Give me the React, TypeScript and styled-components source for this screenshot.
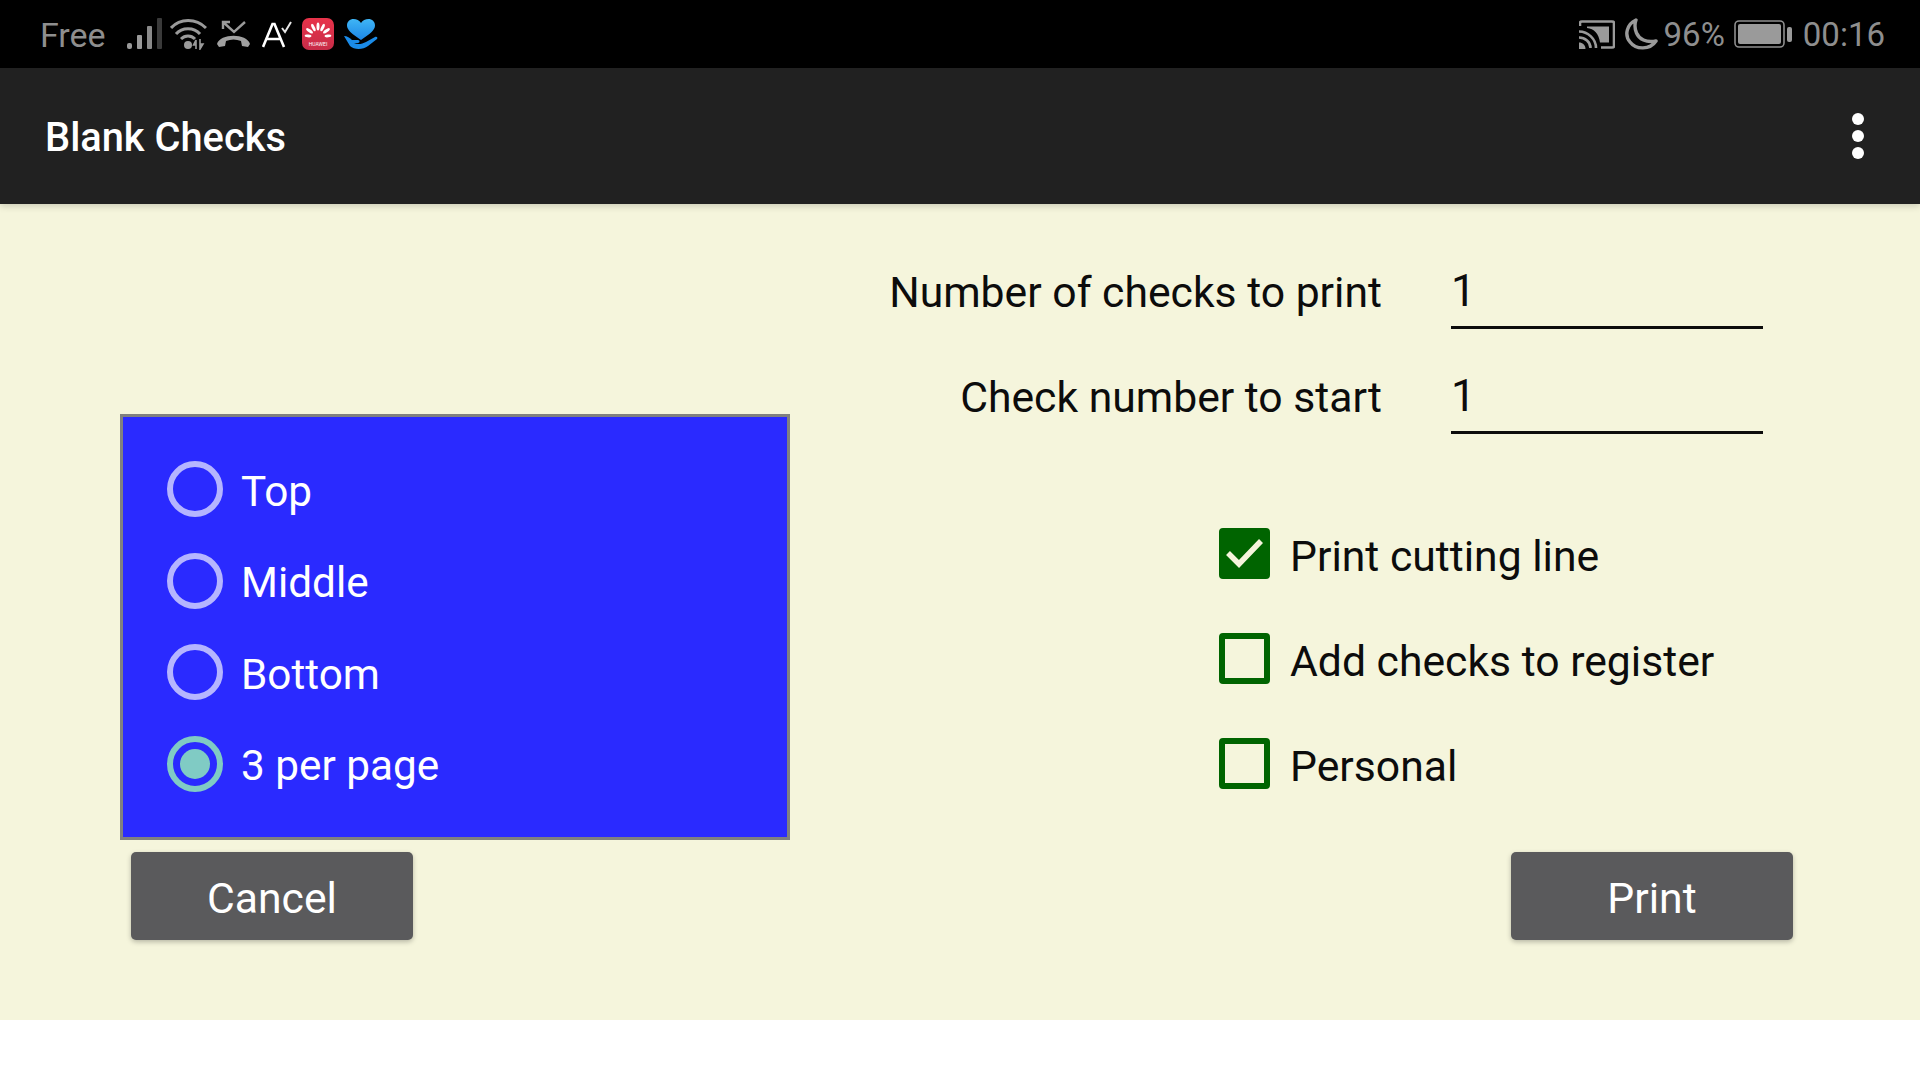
import React from "react";
import styled, { createGlobalStyle } from "styled-components";

const Global = createGlobalStyle`
  html, body { margin: 0; padding: 0; background: #fff; }
  body { font-family: Roboto, "Liberation Sans", sans-serif; }
  * { box-sizing: border-box; }
`;

const Screen = styled.div`
  width: 1920px;
  height: 1080px;
  overflow: hidden;
  display: flex;
  flex-direction: column;
  background: #fff;
`;

const StatusBar = styled.div`
  height: 68px;
  flex: none;
  background: #000;
  color: #8e8e8e;
  display: flex;
  align-items: center;
  justify-content: space-between;
  padding: 0 35px 0 40px;
  font-size: 33px;
  line-height: 68px;
`;

const StatusGroup = styled.div`
  display: flex;
  align-items: center;
`;

const StatusText = styled.span<{ $left?: number; $size?: number }>`
  margin-left: ${(p) => p.$left ?? 0}px;
  font-size: ${(p) => p.$size ?? 33}px;
  position: relative;
  top: 1px;
`;

const Icon = styled.svg<{ $left: number }>`
  display: block;
  flex: none;
  margin-left: ${(p) => p.$left}px;
`;

const Toolbar = styled.header`
  height: 136px;
  flex: none;
  background: #212121;
  display: flex;
  align-items: center;
  justify-content: space-between;
  padding: 0 56px 0 45px;
  position: relative;
  z-index: 1;
  box-shadow: 0 2px 7px rgba(0, 0, 0, 0.18);
`;

const Title = styled.h1`
  margin: 0;
  padding-top: 2px;
  color: #fff;
  font-size: 39.8px;
  font-weight: 500;
`;

const Overflow = styled.div`
  display: flex;
  flex-direction: column;
  gap: 5px;
`;

const Dot = styled.span`
  width: 12px;
  height: 12px;
  border-radius: 50%;
  background: #fff;
`;

const Main = styled.main`
  height: 816px;
  flex: none;
  background: #f5f5dc;
  display: flex;
  color: #0c0c0c;
  font-size: 42.7px;
`;

const LeftColumn = styled.section`
  width: 790px;
  padding: 210px 0 0 120px;
  flex: none;
`;

const RadioPanel = styled.div`
  width: 670px;
  height: 426px;
  background: #2a2aff;
  border: 3px solid #808080;
  padding: 44px 0 0 44px;
  display: flex;
  flex-direction: column;
  gap: 35.5px;
`;

const RadioRow = styled.div`
  display: flex;
  align-items: center;
  height: 56px;
  gap: 18px;
  color: #fff;
`;

const RadioLabel = styled.span`
  font-size: 42.3px;
  padding-top: 4px;
`;

const RadioCircle = styled.span<{ $on?: boolean }>`
  width: 56px;
  height: 56px;
  flex: none;
  border-radius: 50%;
  border: 6px solid ${(p) => (p.$on ? "#80cbc4" : "#b5b5ff")};
  display: flex;
  align-items: center;
  justify-content: center;
  &::after {
    content: "";
    display: ${(p) => (p.$on ? "block" : "none")};
    width: 30px;
    height: 30px;
    border-radius: 50%;
    background: #80cbc4;
  }
`;

const ActionButton = styled.button<{ $left?: number; $right?: number }>`
  display: block;
  width: 282px;
  height: 88px;
  padding: 4px 0 0;
  border: 0;
  border-radius: 5px;
  background: #5a5a5c;
  color: #fff;
  font-family: Roboto, sans-serif;
  font-size: 42.7px;
  box-shadow: 0 2px 5px rgba(0, 0, 0, 0.25);
  margin-top: 12px;
  margin-left: ${(p) => p.$left ?? 0}px;
  margin-right: ${(p) => p.$right ?? 0}px;
`;

const RightColumn = styled.section`
  flex: 1;
  display: flex;
  flex-direction: column;
  align-items: flex-end;
  padding-top: 20px;
`;

const FieldRow = styled.div`
  height: 105px;
  display: flex;
  align-items: stretch;
  margin-right: 157px;
`;

const FieldLabel = styled.label`
  line-height: 136px;
  margin-right: 69px;
  white-space: nowrap;
`;

const FieldInput = styled.input`
  width: 312px;
  height: 105px;
  border: 0;
  border-bottom: 3px solid #0c0c0c;
  background: transparent;
  outline: 0;
  padding: 40px 0 8px;
  font-family: Roboto, sans-serif;
  font-size: 44px;
  color: #0c0c0c;
`;

const CheckList = styled.div`
  align-self: flex-start;
  margin: 94px 0 0 429px;
  display: flex;
  flex-direction: column;
  gap: 54px;
`;

const CheckRow = styled.div`
  height: 51px;
  display: flex;
  align-items: center;
  gap: 20px;
  white-space: nowrap;
`;

const CheckBox = styled.span<{ $on?: boolean }>`
  width: 51px;
  height: 51px;
  flex: none;
  border-radius: 4px;
  border: 6px solid #006400;
  background: ${(p) => (p.$on ? "#006400" : "transparent")};
  display: flex;
  align-items: center;
  justify-content: center;
`;

const CheckLabel = styled.span`
  position: relative;
  top: 2px;
`;

const BottomGap = styled.div`
  height: 51px;
  flex: none;
`;

const Footer = styled.div`
  align-self: flex-end;
`;

const Signal = () => (
  <Icon $left={21} width="35" height="32" viewBox="0 0 35 32">
    <rect x="0" y="25" width="5" height="6" rx="2" fill="#9a9a9a" />
    <rect x="10" y="17" width="5" height="14" rx="1" fill="#9a9a9a" />
    <rect x="20" y="8" width="5" height="23" rx="1" fill="#8a8a8a" />
    <rect x="30" y="0" width="5" height="31" rx="1" fill="#3a3a3a" />
  </Icon>
);

const Wifi = () => (
  <Icon $left={8} width="37" height="31" viewBox="0 0 37 31">
    <g fill="none" stroke="#9a9a9a" strokeWidth="3">
      <path d="M1 9 C10 -1 26 -1 36 9" />
      <path d="M6 15 C12 8 24 8 30 15" />
      <path d="M11 20 C15 16 21 16 25 20" />
    </g>
    <circle cx="18" cy="26" r="4" fill="#9a9a9a" />
    <path d="M26 30 V21 L23.5 26 H26 M30 20 V30 L33 25 H30" fill="#9a9a9a" stroke="#9a9a9a" strokeWidth="1.6" />
  </Icon>
);

const MissedCall = () => (
  <Icon $left={10} width="33" height="28" viewBox="0 0 33 28">
    <path d="M6 9 V2 H13 M6 2 L17 12 L28 2" fill="none" stroke="#9a9a9a" strokeWidth="2.4" />
    <path d="M0 24 C3 13 30 13 33 24 L31 27 L25 26 L24 21 C19 19 14 19 9 21 L8 26 L2 27 Z" fill="#a0a0a0" />
  </Icon>
);

const SpellCheck = () => (
  <Icon $left={12} width="30" height="27" viewBox="0 0 30 27">
    <path d="M1 26 L10.5 3 H12.5 L22 26 M5 18 H18" fill="none" stroke="#fff" strokeWidth="2.6" />
    <path d="M20 7 L23 11 L29 1" fill="none" stroke="#e6e6e6" strokeWidth="2" />
  </Icon>
);

const HuaweiBadge = () => (
  <Icon $left={10} width="32" height="32" viewBox="0 0 32 32">
    <defs>
      <linearGradient id="hw" x1="0" y1="0" x2="0" y2="1">
        <stop offset="0" stopColor="#e8334a" />
        <stop offset="1" stopColor="#c72c48" />
      </linearGradient>
    </defs>
    <rect width="32" height="32" rx="7" fill="url(#hw)" />
    <g fill="#fff">
      <ellipse cx="16" cy="8.5" rx="1.5" ry="4" />
      <ellipse cx="16" cy="8.5" rx="1.5" ry="4" transform="rotate(-26 16 19)" />
      <ellipse cx="16" cy="8.5" rx="1.5" ry="4" transform="rotate(26 16 19)" />
      <ellipse cx="16" cy="8.5" rx="1.5" ry="4" transform="rotate(-54 16 19)" />
      <ellipse cx="16" cy="8.5" rx="1.5" ry="4" transform="rotate(54 16 19)" />
      <ellipse cx="16" cy="9" rx="1.4" ry="3.4" transform="rotate(-84 16 19)" />
      <ellipse cx="16" cy="9" rx="1.4" ry="3.4" transform="rotate(84 16 19)" />
    </g>
    <text x="16" y="27.5" textAnchor="middle" fontSize="5" fontFamily="Roboto" fill="#fff">HUAWEI</text>
  </Icon>
);

const HeartHand = () => (
  <Icon $left={10} width="34" height="31" viewBox="0 0 34 31">
    <defs>
      <linearGradient id="hh" x1="0" y1="0" x2="0" y2="1">
        <stop offset="0" stopColor="#3fb5f5" />
        <stop offset="1" stopColor="#1c86e6" />
      </linearGradient>
    </defs>
    <path d="M17 21 C8 15 3 11 3 6.5 C3 2.5 6 0 9.5 0 C12.5 0 15.5 1.5 17 4 C18.5 1.5 21.5 0 24.5 0 C28 0 31 2.5 31 6.5 C31 11 26 15 17 21 Z" fill="url(#hh)" />
    <path d="M0 17 C3 17 6 19 8 21 H14 C16 21 16 24 14 24 H10 C14 26 18 25 22 23 L31 18 C33 17 34 19 33 20 L24 27 C19 31 10 31 6 27 Z" fill="#1a8be8" />
  </Icon>
);

const Cast = () => (
  <Icon $left={0} width="36" height="29" viewBox="0 0 36 29">
    <path d="M1 6 V3 Q1 1.5 3 1.5 H33 Q35 1.5 35 3 V26 Q35 27.5 33 27.5 H22" fill="none" stroke="#9a9a9a" strokeWidth="2.6" />
    <path d="M8 6.5 H30 V22.5 H21 C20 14 15 8.5 8 8 Z" fill="#9a9a9a" />
    <path d="M0 11.5 C9 11.5 17 19 17 28 M0 17.5 C6 17.5 11.5 22 11.5 28" fill="none" stroke="#9a9a9a" strokeWidth="2.6" />
    <path d="M0 22.5 C3.5 22.5 6.5 25 6.5 29 H0 Z" fill="#9a9a9a" />
  </Icon>
);

const Moon = () => (
  <Icon $left={10} width="33" height="32" viewBox="0 0 33 32">
    <path d="M11 2 C2 6 -1 17 5 24 C11 32 25 32 31 23 C21 25 14 21 11.5 15 C9.5 10 9.5 6 11 2 Z" fill="none" stroke="#9a9a9a" strokeWidth="3.4" strokeLinejoin="round" />
  </Icon>
);

const Battery = () => (
  <Icon $left={9} width="59" height="28" viewBox="0 0 59 28">
    <rect x="1" y="1" width="49" height="26" rx="4" fill="none" stroke="#8e8e8e" strokeWidth="1.6" />
    <rect x="4" y="4" width="43" height="20" rx="2" fill="#9a9a9a" />
    <rect x="53" y="7" width="5" height="15" rx="2" fill="#9a9a9a" />
  </Icon>
);

const Check = () => (
  <svg width="39" height="31" viewBox="0 0 39 31">
    <path d="M3 15 L14 26 L36 3" fill="none" stroke="#f5f5dc" strokeWidth="5.5" />
  </svg>
);

const radios = ["Top", "Middle", "Bottom", "3 per page"];
const checks = ["Print cutting line", "Add checks to register", "Personal"];
const fields = ["Number of checks to print", "Check number to start"];

export default function App() {
  return (
    <Screen>
      <Global />
      <StatusBar>
        <StatusGroup>
          <StatusText $size={34}>Free</StatusText>
          <Signal />
          <Wifi />
          <MissedCall />
          <SpellCheck />
          <HuaweiBadge />
          <HeartHand />
        </StatusGroup>
        <StatusGroup>
          <Cast />
          <Moon />
          <StatusText $left={6}>96%</StatusText>
          <Battery />
          <StatusText $left={10}>00:16</StatusText>
        </StatusGroup>
      </StatusBar>
      <Toolbar>
        <Title>Blank Checks</Title>
        <Overflow>
          <Dot />
          <Dot />
          <Dot />
        </Overflow>
      </Toolbar>
      <Main>
        <LeftColumn>
          <RadioPanel>
            {radios.map((r, i) => (
              <RadioRow key={r}>
                <RadioCircle $on={i === 3} />
                <RadioLabel>{r}</RadioLabel>
              </RadioRow>
            ))}
          </RadioPanel>
          <ActionButton $left={11}>Cancel</ActionButton>
        </LeftColumn>
        <RightColumn>
          {fields.map((f) => (
            <FieldRow key={f}>
              <FieldLabel>{f}</FieldLabel>
              <FieldInput defaultValue="1" />
            </FieldRow>
          ))}
          <CheckList>
            {checks.map((c, i) => (
              <CheckRow key={c}>
                <CheckBox $on={i === 0}>{i === 0 && <Check />}</CheckBox>
                <CheckLabel>{c}</CheckLabel>
              </CheckRow>
            ))}
          </CheckList>
          <Footer>
            <BottomGap />
            <ActionButton $right={127}>Print</ActionButton>
          </Footer>
        </RightColumn>
      </Main>
    </Screen>
  );
}
